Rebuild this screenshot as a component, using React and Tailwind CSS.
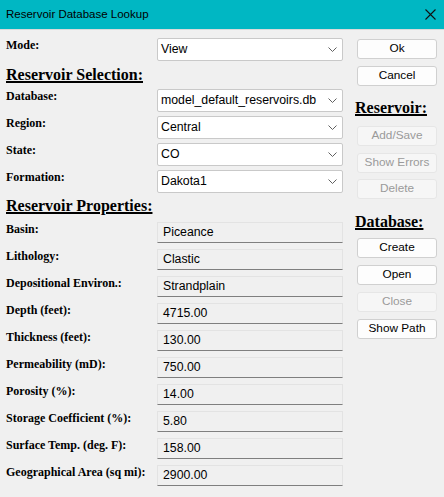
const SELECTS = [
  { label: 'Database:', value: 'model_default_reservoirs.db' },
  { label: 'Region:', value: 'Central' },
  { label: 'State:', value: 'CO' },
  { label: 'Formation:', value: 'Dakota1' },
]

const PROPS = [
  { label: 'Basin:', value: 'Piceance' },
  { label: 'Lithology:', value: 'Clastic' },
  { label: 'Depositional Environ.:', value: 'Strandplain' },
  { label: 'Depth (feet):', value: '4715.00' },
  { label: 'Thickness (feet):', value: '130.00' },
  { label: 'Permeability (mD):', value: '750.00' },
  { label: 'Porosity (%):', value: '14.00' },
  { label: 'Storage Coefficient (%):', value: '5.80' },
  { label: 'Surface Temp. (deg. F):', value: '158.00' },
  { label: 'Geographical Area (sq mi):', value: '2900.00' },
]

const serif = "font-['Liberation_Serif','Times_New_Roman',serif]"
const sans = "font-['Liberation_Sans',Arial,sans-serif]"

function Label({ children }) {
  return (
    <div className={`${serif} w-[151px] shrink-0 text-[12px] leading-[14px] font-bold text-black`}>
      {children}
    </div>
  )
}

function Heading({ children, className = '' }) {
  return (
    <div className={`${serif} text-[16px] leading-[18px] font-bold text-black underline decoration-2 ${className}`}>
      {children}
    </div>
  )
}

function Combo({ value }) {
  return (
    <div className={`${sans} w-[186px] h-[23px] bg-white border border-[#c9c9c9] rounded-[2px] flex items-center justify-between pl-[3px] pr-[5px] text-[12.3px] text-black`}>
      <span>{value}</span>
      <svg width="9" height="5" viewBox="0 0 9 5" fill="none">
        <path d="M0.5 0.5 L4.5 4.5 L8.5 0.5" stroke="#606060" strokeWidth="1" />
      </svg>
    </div>
  )
}

function Field({ value }) {
  return (
    <div className={`${sans} w-[186px] h-[21px] bg-[#f0f0f0] border border-[#e3e3e3] border-b-[#7f7f7f] flex items-center pl-[5px] text-[12.3px] text-black`}>
      {value}
    </div>
  )
}

function Btn({ children, disabled, className = '' }) {
  return (
    <div
      className={`${sans} ml-[2px] w-[80px] h-[20px] rounded-[3px] border flex items-center justify-center text-[11.8px] ${
        disabled
          ? 'bg-[#f6f6f6] border-[#e6e6e6] text-[#9a9a9a]'
          : 'bg-[#fdfdfd] border-[#d0d0d0] text-black'
      } ${className}`}
    >
      {children}
    </div>
  )
}

export default function App() {
  return (
    <div className="w-[444px] h-[497px] bg-[#f0f0f0] overflow-hidden">
      {/* Title bar */}
      <div className="h-[29px] bg-[#00b7c3] flex items-center justify-between pl-[6px] pr-[7px]">
        <span className={`${sans} text-[11.5px] text-black`}>Reservoir Database Lookup</span>
        <svg width="11" height="11" viewBox="0 0 11 11" className="mr-[1px]">
          <path d="M0.5 0.5 L10.5 10.5 M10.5 0.5 L0.5 10.5" stroke="#111" strokeWidth="1.1" />
        </svg>
      </div>
      <div className="h-px bg-[#dadada]" />

      <div className="flex">
        {/* Left column */}
        <div className="pl-[6px] pt-[8px] w-[349px]">
          <div className="flex h-[23px]">
            <Label>Mode:</Label>
            <Combo value="View" />
          </div>

          <Heading className="mt-[5px]">Reservoir Selection:</Heading>

          <div className="mt-[5px] flex flex-col gap-[4px]">
            {SELECTS.map(s => (
              <div key={s.label} className="flex h-[23px]">
                <Label>{s.label}</Label>
                <Combo value={s.value} />
              </div>
            ))}
          </div>

          <Heading className="mt-[4px]">Reservoir Properties:</Heading>

          <div className="mt-[7px] flex flex-col gap-[6px]">
            {PROPS.map(p => (
              <div key={p.label} className="flex h-[21px]">
                <Label>{p.label}</Label>
                <Field value={p.value} />
              </div>
            ))}
          </div>
        </div>

        {/* Right column */}
        <div className="pt-[9px] pl-[6px]">
          <Btn>Ok</Btn>
          <Btn className="mt-[7px]">Cancel</Btn>
          <Heading className="mt-[13px]">Reservoir:</Heading>
          <Btn disabled className="mt-[9px]">Add/Save</Btn>
          <Btn disabled className="mt-[7px]">Show Errors</Btn>
          <Btn disabled className="mt-[6px]">Delete</Btn>
          <Heading className="mt-[14px]">Database:</Heading>
          <Btn className="mt-[7px]">Create</Btn>
          <Btn className="mt-[7px]">Open</Btn>
          <Btn disabled className="mt-[7px]">Close</Btn>
          <Btn className="mt-[7px]">Show Path</Btn>
        </div>
      </div>
    </div>
  )
}
